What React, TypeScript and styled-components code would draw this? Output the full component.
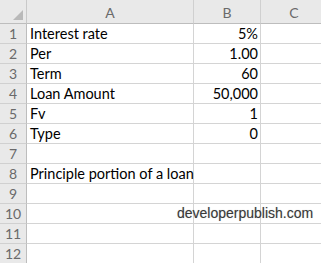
import React from "react";
import styled, { createGlobalStyle } from "styled-components";

const Global = createGlobalStyle`
  html, body { margin: 0; padding: 0; background: #ffffff; overflow: hidden; }
  body { font-family: "Lato", "Liberation Sans", sans-serif; }
`;

const Page = styled.div`
  position: relative;
  width: 321px;
  height: 263px;
  overflow: hidden;
  background: #ffffff;
`;

const Sheet = styled.div`
  display: grid;
  grid-template-columns: 27px 167px 67px 67px;
  grid-template-rows: 24px repeat(12, 20px);
  width: 328px;
`;

const Corner = styled.div`
  background: #e9e9e9;
  border-right: 1px solid #c9c9c9;
  border-bottom: 1px solid #bdbdbd;
  display: flex;
  align-items: flex-end;
  justify-content: flex-end;
  padding: 0 3px 3px 0;
`;

const ColHead = styled.div`
  background: #e9e9e9;
  border-right: 1px solid #d0d0d0;
  border-bottom: 1px solid #bdbdbd;
  display: flex;
  align-items: center;
  justify-content: center;
  padding-top: 2px;
  font-family: "Lato", sans-serif;
  font-size: 14px;
  color: #6a6a6a;
`;

const RowHead = styled.div`
  background: #e9e9e9;
  border-right: 1px solid #bdbdbd;
  border-bottom: 1px solid #d0d0d0;
  display: flex;
  align-items: flex-end;
  justify-content: center;
  padding-bottom: 1px;
  font-family: "Lato", sans-serif;
  font-size: 14px;
  line-height: 17px;
  color: #6a6a6a;
`;

const Cell = styled.div<{ $align?: "left" | "right" }>`
  border-right: 1px solid #d4d4d4;
  border-bottom: 1px solid #d4d4d4;
  display: flex;
  align-items: flex-end;
  justify-content: ${(p) => (p.$align === "right" ? "flex-end" : "flex-start")};
  padding: 0 2px 1px 3px;
  font-family: "Lato", sans-serif;
  font-size: 14.5px;
  line-height: 17px;
  color: #000000;
  white-space: nowrap;
  overflow: visible;
`;

const Watermark = styled.div`
  position: absolute;
  left: 177px;
  top: 205px;
  font-family: "Liberation Sans", Arial, sans-serif;
  font-size: 14px;
  color: #3a3a3a;
  text-shadow: 0 0 1px rgba(0, 0, 0, 0.25);
  white-space: nowrap;
`;

const rows: [string, string][] = [
  ["Interest rate", "5%"],
  ["Per", "1.00"],
  ["Term", "60"],
  ["Loan Amount", "50,000"],
  ["Fv", "1"],
  ["Type", "0"],
  ["", ""],
  ["Principle portion of a loan", ""],
  ["", ""],
  ["", ""],
  ["", ""],
  ["", ""],
];

export default function App() {
  return (
    <Page>
      <Global />
      <Sheet>
        <Corner>
          <svg width="10" height="10" viewBox="0 0 10 10">
            <polygon points="10,0 10,10 0,10" fill="#b9b9b9" />
          </svg>
        </Corner>
        <ColHead>A</ColHead>
        <ColHead>B</ColHead>
        <ColHead>C</ColHead>
        {rows.map(([a, b], i) => (
          <React.Fragment key={i}>
            <RowHead>{i + 1}</RowHead>
            <Cell>{a}</Cell>
            <Cell $align="right">{b}</Cell>
            <Cell />
          </React.Fragment>
        ))}
      </Sheet>
      <Watermark>developerpublish.com</Watermark>
    </Page>
  );
}
